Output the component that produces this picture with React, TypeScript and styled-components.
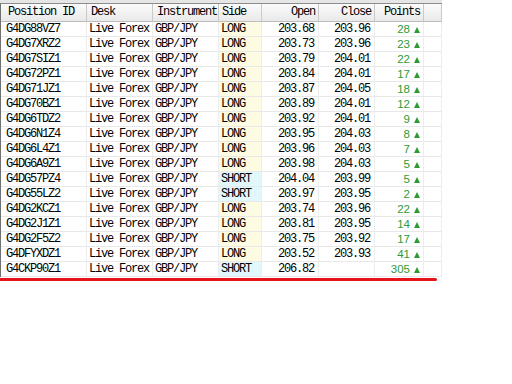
import React from "react";
import styled, { createGlobalStyle } from "styled-components";

const GlobalStyle = createGlobalStyle`
  html, body { margin: 0; padding: 0; background: #ffffff; }
  body { width: 512px; height: 384px; overflow: hidden; }
`;

type Row = {
  id: string;
  side: "LONG" | "SHORT";
  open: string;
  close: string;
  points: number;
};

const rows: Row[] = [
  { id: "G4DG88VZ7", side: "LONG", open: "203.68", close: "203.96", points: 28 },
  { id: "G4DG7XRZ2", side: "LONG", open: "203.73", close: "203.96", points: 23 },
  { id: "G4DG7SIZ1", side: "LONG", open: "203.79", close: "204.01", points: 22 },
  { id: "G4DG72PZ1", side: "LONG", open: "203.84", close: "204.01", points: 17 },
  { id: "G4DG71JZ1", side: "LONG", open: "203.87", close: "204.05", points: 18 },
  { id: "G4DG70BZ1", side: "LONG", open: "203.89", close: "204.01", points: 12 },
  { id: "G4DG6TDZ2", side: "LONG", open: "203.92", close: "204.01", points: 9 },
  { id: "G4DG6N1Z4", side: "LONG", open: "203.95", close: "204.03", points: 8 },
  { id: "G4DG6L4Z1", side: "LONG", open: "203.96", close: "204.03", points: 7 },
  { id: "G4DG6A9Z1", side: "LONG", open: "203.98", close: "204.03", points: 5 },
  { id: "G4DG57PZ4", side: "SHORT", open: "204.04", close: "203.99", points: 5 },
  { id: "G4DG55LZ2", side: "SHORT", open: "203.97", close: "203.95", points: 2 },
  { id: "G4DG2KCZ1", side: "LONG", open: "203.74", close: "203.96", points: 22 },
  { id: "G4DG2J1Z1", side: "LONG", open: "203.81", close: "203.95", points: 14 },
  { id: "G4DG2F5Z2", side: "LONG", open: "203.75", close: "203.92", points: 17 },
  { id: "G4DFYXDZ1", side: "LONG", open: "203.52", close: "203.93", points: 41 },
  { id: "G4CKP90Z1", side: "SHORT", open: "206.82", close: "", points: 305 },
];

const COLS = "86px 66px 66px 43px 57px 56px 49px 18px";

const Page = styled.div`
  padding-top: 3px;
  width: 442px;
  background: linear-gradient(#e6e6e6 0, #e6e6e6 3px, transparent 3px);
`;

const Grid = styled.div`
  width: 441px;
  border-left: 1px solid #707070;
  border-top: 1px solid #8c8c8c;
  font-family: "Liberation Mono", "DejaVu Sans Mono", monospace;
  font-size: 12px;
  letter-spacing: -1.2px;
  color: #000;
`;

const HeaderRow = styled.div`
  display: grid;
  grid-template-columns: ${COLS};
  height: 18px;
`;

const HeadCell = styled.div<{ $right?: boolean; $indent?: number }>`
  box-sizing: border-box;
  height: 18px;
  line-height: 17px;
  background: linear-gradient(#fbfbfb, #e9e9e9);
  border-right: 1px solid #c9c9c9;
  border-bottom: 1px solid #bdbdbd;
  padding: ${(p) => (p.$right ? "0 3px 0 0" : `0 0 0 ${p.$indent ?? 4}px`)};
  text-align: ${(p) => (p.$right ? "right" : "left")};
  white-space: nowrap;
  overflow: hidden;
`;

const DataRow = styled.div`
  display: grid;
  grid-template-columns: ${COLS};
  height: 15px;
`;

const Cell = styled.div<{ $right?: boolean; $pad?: number; $bg?: string }>`
  box-sizing: border-box;
  height: 15px;
  line-height: 15px;
  border-bottom: 1px solid #e8e8e8;
  border-right: 1px solid #ededed;
  background: ${(p) => p.$bg ?? "#ffffff"};
  padding: ${(p) => (p.$right ? `0 ${p.$pad ?? 4}px 0 0` : `0 0 0 ${p.$pad ?? 2}px`)};
  text-align: ${(p) => (p.$right ? "right" : "left")};
  white-space: nowrap;
  overflow: hidden;
`;

const Points = styled.span`
  font-family: "Liberation Sans", Arial, sans-serif;
  font-size: 11.5px;
  letter-spacing: 0;
  color: #2f9a35;
  display: inline-flex;
  align-items: center;
  gap: 4px;
`;

const Triangle = styled.span`
  display: inline-block;
  width: 0;
  height: 0;
  border-left: 3px solid transparent;
  border-right: 3px solid transparent;
  border-bottom: 6px solid #2f9a35;
  margin-top: 1px;
`;

const Underline = styled.div`
  width: 437px;
  height: 3px;
  margin-top: 1px;
  background: #e5141b;
  border-radius: 0 2px 2px 0;
`;

const sideBg = (side: Row["side"]) => (side === "LONG" ? "#fdfbe2" : "#e0f8fb");

export default function App() {
  return (
    <>
      <GlobalStyle />
      <Page>
        <Grid>
          <HeaderRow>
            <HeadCell $indent={7}>Position ID</HeadCell>
            <HeadCell $indent={4}>Desk</HeadCell>
            <HeadCell $indent={4}>Instrument</HeadCell>
            <HeadCell $indent={3}>Side</HeadCell>
            <HeadCell $right>Open</HeadCell>
            <HeadCell $right>Close</HeadCell>
            <HeadCell $right>Points</HeadCell>
            <HeadCell />
          </HeaderRow>
          {rows.map((r) => (
            <DataRow key={r.id}>
              <Cell $pad={5}>{r.id}</Cell>
              <Cell $pad={2}>Live Forex</Cell>
              <Cell $pad={2}>GBP/JPY</Cell>
              <Cell $pad={2} $bg={sideBg(r.side)}>{r.side}</Cell>
              <Cell $right $pad={4}>{r.open}</Cell>
              <Cell $right $pad={4}>{r.close}</Cell>
              <Cell $right $pad={3}>
                <Points>
                  {r.points}
                  <Triangle />
                </Points>
              </Cell>
              <Cell />
            </DataRow>
          ))}
        </Grid>
        <Underline />
      </Page>
    </>
  );
}
